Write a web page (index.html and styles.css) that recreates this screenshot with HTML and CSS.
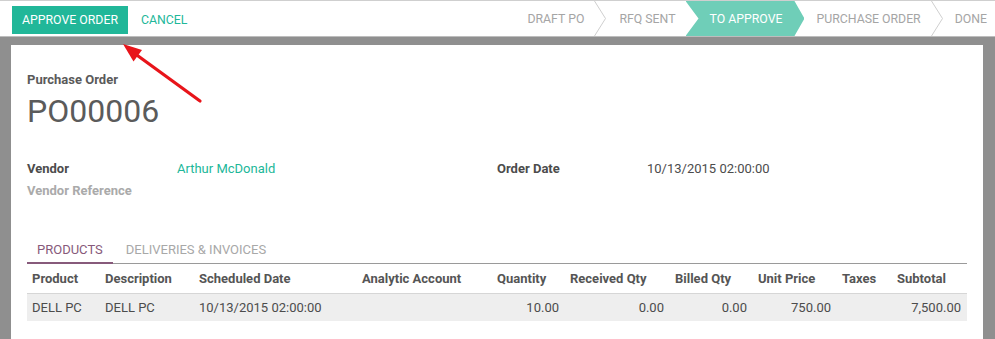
FILE: index.html
```html
<!DOCTYPE html>
<html>
<head>
<meta charset="utf-8">
<link rel="stylesheet" href="styles.css">
</head>
<body>
<div class="topbar">
  <div class="actions">
    <button class="btn btn-primary">Approve Order</button>
    <button class="btn btn-link">Cancel</button>
  </div>
  <div class="statusbar">
    <span class="status first">Draft PO</span>
    <svg class="sep" width="12" height="35" viewBox="0 0 12 35"><polyline points="0.5,0 11.5,17.5 0.5,35" fill="none" stroke="#cfcfcf" stroke-width="1"/></svg>
    <span class="status">RFQ Sent</span>
    <span class="status active">To Approve</span>
    <span class="status">Purchase Order</span>
    <svg class="sep" width="12" height="35" viewBox="0 0 12 35"><polyline points="0.5,0 11.5,17.5 0.5,35" fill="none" stroke="#cfcfcf" stroke-width="1"/></svg>
    <span class="status last">Done</span>
  </div>
</div>
<div class="backdrop">
  <div class="sheet">
    <div class="title-label">Purchase Order</div>
    <h1 class="title-name">PO00006</h1>
    <div class="groups">
      <div class="group">
        <div class="field"><span class="label">Vendor</span><span class="value link">Arthur McDonald</span></div>
        <div class="field"><span class="label muted">Vendor Reference</span><span class="value"></span></div>
      </div>
      <div class="group">
        <div class="field"><span class="label">Order Date</span><span class="value">10/13/2015 02:00:00</span></div>
      </div>
    </div>
    <div class="notebook">
      <div class="tabs">
        <span class="tab active">Products</span>
        <span class="tab">Deliveries &amp; Invoices</span>
      </div>
      <table class="lines">
        <colgroup>
          <col style="width:73px"><col style="width:94px"><col style="width:163px"><col style="width:135px"><col style="width:73px"><col style="width:105px"><col style="width:83px"><col style="width:84px"><col style="width:55px"><col style="width:75px">
        </colgroup>
        <thead>
          <tr><th>Product</th><th>Description</th><th>Scheduled Date</th><th>Analytic Account</th><th>Quantity</th><th>Received Qty</th><th>Billed Qty</th><th>Unit Price</th><th>Taxes</th><th>Subtotal</th></tr>
        </thead>
        <tbody>
          <tr><td>DELL PC</td><td>DELL PC</td><td>10/13/2015 02:00:00</td><td></td><td class="num">10.00</td><td class="num">0.00</td><td class="num">0.00</td><td class="num">750.00</td><td></td><td class="num">7,500.00</td></tr>
        </tbody>
      </table>
    </div>
  </div>
</div>
<svg class="annot-arrow" width="90" height="70" viewBox="0 0 90 70">
  <line x1="80" y1="60" x2="14" y2="12" stroke="#e8141a" stroke-width="3.2" stroke-linecap="round"/>
  <polygon points="3,3 22,9 13.5,20.5" fill="#e8141a"/>
</svg>
</body>
</html>
```
FILE: styles.css
```css
* { box-sizing: border-box; }
html, body { margin: 0; padding: 0; }
body {
  font-family: Roboto, "Liberation Sans", sans-serif;
  font-size: 13px;
  color: #4c4c4c;
  background: #fff;
  width: 995px;
  height: 339px;
  overflow: hidden;
  position: relative;
}
.topbar {
  display: flex;
  justify-content: space-between;
  align-items: stretch;
  height: 37px;
  border-top: 1px solid #cfcfcf;
  border-bottom: 1px solid #bdbdbd;
  background: #fff;
}
.actions {
  display: flex;
  align-items: center;
  gap: 3px;
  padding-left: 12px;
}
.btn {
  font-family: inherit;
  font-size: 12.3px;
  text-transform: uppercase;
  border: none;
  height: 28px;
  padding: 0 10px;
  line-height: 28px;
  cursor: pointer;
  margin-top: 2px;
}
.btn-primary { background: #21b799; color: #fff; }
.btn-link { background: transparent; color: #21b799; }
.statusbar {
  display: flex;
  align-items: stretch;
  padding-right: 8px;
}
.status {
  display: flex;
  align-items: center;
  text-transform: uppercase;
  color: #a5a5a5;
  font-size: 12.3px;
  padding: 0 10px 0 13px;
}
.status.first { padding-left: 0; }
.status.active {
  background: #6fceb8;
  color: #fff;
  padding: 0 22px 0 24px;
  clip-path: polygon(0 0, calc(100% - 10px) 0, 100% 50%, calc(100% - 10px) 100%, 0 100%, 13px 50%);
}
.status.active + .status { padding-left: 12px; }
.status.last { padding-left: 12px; padding-right: 0; }
.sep { display: block; flex: none; }
.backdrop {
  background: #8f8f8f;
  padding: 8px 12px 0 11px;
  height: 302px;
}
.sheet {
  background: #fff;
  height: 100%;
  padding: 26px 16px 0 16px;
}
.title-label {
  font-weight: bold;
  line-height: 18px;
  color: #5a5a5a;
}
.title-name {
  margin: 3px 0 0 0;
  font-size: 32px;
  font-weight: normal;
  line-height: 38px;
  color: #5b5b5b;
}
.groups {
  display: flex;
  margin-top: 27px;
}
.group { width: 470px; }
.field {
  display: flex;
  height: 22px;
  align-items: center;
}
.label {
  width: 150px;
  flex: none;
  font-weight: bold;
  color: #4c4c4c;
}
.label.muted { color: #aaa; }
.value { color: #4c4c4c; }
.value.link { color: #21b799; }
.notebook { margin-top: 35px; }
.tabs {
  display: flex;
  border-bottom: 1px solid #9a9a9a;
  gap: 3px;
}
.tab {
  position: relative;
  text-transform: uppercase;
  color: #a8a8a8;
  padding: 5px 10px 4px 10px;
  line-height: 18px;
}
.tab.active { color: #875a7b; }
.tab.active::after {
  content: "";
  position: absolute;
  left: 0; right: 0; bottom: -1px;
  height: 2px;
  background: #875a7b;
}
.lines {
  border-collapse: collapse;
  table-layout: fixed;
  width: 940px;
}
.lines th {
  text-align: left;
  font-weight: bold;
  color: #555;
  height: 29px;
  padding: 0 5px;
  border-bottom: 1px solid #d6d6d6;
  white-space: nowrap;
}
.lines td {
  height: 28px;
  padding: 0 5px;
  background: #eeeeee;
  color: #4c4c4c;
  white-space: nowrap;
}
.lines td.num { text-align: right; padding-right: 6px; }
.annot-arrow {
  position: absolute;
  left: 120px;
  top: 41px;
}
```
